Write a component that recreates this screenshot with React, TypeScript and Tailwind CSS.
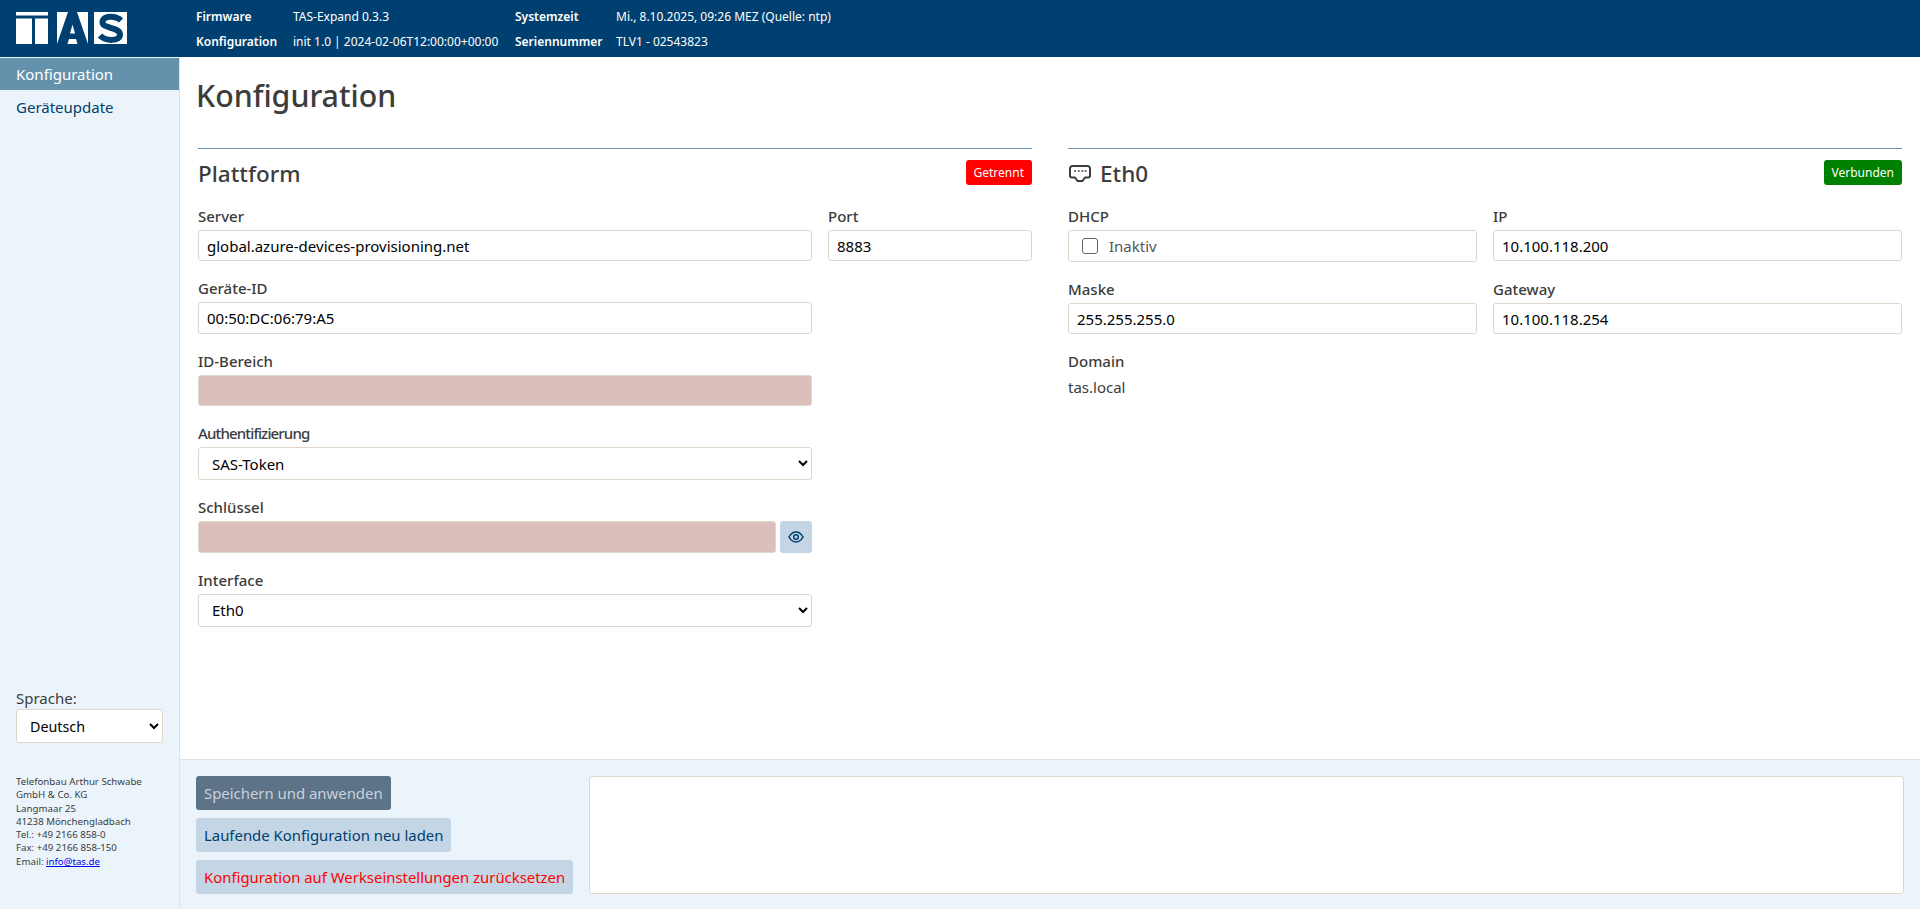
import React from "react";

function Label({ children, tight }: { children: React.ReactNode; tight?: boolean }) {
  return (
    <div className={"h-[25px] text-[15px] leading-[22px] font-medium text-[#3c3c3c] " + (tight ? "tracking-[-0.85px]" : "")}>
      {children}
    </div>
  );
}

function TextBox({ value, disabled }: { value?: string; disabled?: boolean }) {
  return (
    <input
      readOnly
      value={value ?? ""}
      className={
        "block w-full h-[31.250px] px-[8px] text-[15px] text-black rounded-[3px] border border-[#e0d6ca] outline-none " +
        (disabled ? "bg-[#dbbfbb]" : "bg-white")
      }
    />
  );
}

function Select({ value, small }: { value: string; small?: boolean }) {
  return (
    <select
      defaultValue={value}
      className={
        "block w-full h-[33.500px] pl-[9px] pr-[2px] text-black bg-white rounded-[3px] border border-[#e0d6ca] outline-none " +
        (small ? "text-[14.300px]" : "text-[15px]")
      }
    >
      <option>{value}</option>
    </select>
  );
}

function Field({ label, tight, children }: { label: string; tight?: boolean; children: React.ReactNode }) {
  return (
    <div className="mb-[16px]">
      <Label tight={tight}>{label}</Label>
      {children}
    </div>
  );
}

function Logo() {
  return (
    <svg width="111" height="32" viewBox="0 0 111 32">
      <rect x="0" y="0" width="32" height="3.500" fill="#fff" />
      <rect x="0" y="6.500" width="16" height="25.500" fill="#fff" />
      <rect x="19" y="6.500" width="13" height="25.500" fill="#fff" />
      <rect x="41" y="0" width="31" height="32" fill="#fff" />
      <path d="M41 32L52 0h9l11 32H61.500l-1.500-5h-7l-1.500 5z" fill="#004070" />
      <path d="M54 21.500h5l-2.500-9z" fill="#fff" />
      <rect x="78" y="0" width="33" height="32" fill="#fff" />
      <path d="M105 8.500C100 3.500 87 3 86.500 10C86 17 104 14.500 104 22.500C104 29.500 90 29.500 84 23.500" fill="none" stroke="#004070" strokeWidth="6" />
    </svg>
  );
}

function PortIcon() {
  return (
    <svg width="22" height="18" viewBox="0 0 22 18" fill="none" stroke="#3c3c3c" strokeWidth="2" strokeLinejoin="round">
      <path d="M3.500 1h15A2.500 2.500 0 0 1 21 3.500v7a2 2 0 0 1-2 2h-3l-2.500 3.500h-5L6 12.500H3a2 2 0 0 1-2-2v-7A2.500 2.500 0 0 1 3.500 1z" />
      <path d="M6 5.200v1.600M9.700 5.200v1.600M13.300 5.200v1.600M16.500 5.200v1.600" strokeWidth="1.800" />
    </svg>
  );
}

function EyeIcon() {
  return (
    <svg width="16" height="12" viewBox="0 0 16 12" fill="none" stroke="#004070" strokeWidth="1.500">
      <path d="M1 6C3 2.500 5.500 1 8 1s5 1.500 7 5c-2 3.500-4.500 5-7 5S3 9.500 1 6z" />
      <circle cx="8" cy="6" r="2.300" />
    </svg>
  );
}

function SectionHead({ title, badge, color, icon }: { title: string; badge: string; color: string; icon?: React.ReactNode }) {
  return (
    <div className="flex justify-between items-start h-[45px]">
      <h2 className="flex items-center text-[22.500px] leading-[27px] font-medium text-[#3c3c3c]">
        {icon}
        {title}
      </h2>
      <span className={"h-[25px] px-[8px] leading-[25px] rounded-[3px] text-white text-[12px] " + color}>{badge}</span>
    </div>
  );
}

export default function App() {
  return (
    <div className="h-screen flex flex-col overflow-hidden bg-white" style={{ fontFamily: '"Noto Sans", sans-serif' }}>
      <header className="h-[57px] shrink-0 bg-[#004070] flex text-white text-[12px]">
        <div className="w-[196px] pl-[16px] pt-[12px]"><Logo /></div>
        <div className="grid grid-cols-[97px_222px_101px_1fr] grid-rows-[25px_25px] pt-[4px] items-center">
          <b className="font-semibold">Firmware</b><span>TAS-Expand 0.3.3</span>
          <b className="font-semibold">Systemzeit</b><span>Mi., 8.10.2025, 09:26 MEZ (Quelle: ntp)</span>
          <b className="font-semibold">Konfiguration</b><span>init 1.0 | 2024-02-06T12:00:00+00:00</span>
          <b className="font-semibold">Seriennummer</b><span>TLV1 - 02543823</span>
        </div>
      </header>
      <div className="flex flex-1 min-h-0">
        <aside className="w-[180px] shrink-0 bg-[#ebf4fb] border-r border-[#dee2e6] flex flex-col">
          <div className="mt-[1px] h-[32px] bg-[#6492ac] text-white text-[15px] leading-[32px] pl-[16px]">Konfiguration</div>
          <div className="h-[33px] text-[#004070] text-[15px] leading-[34px] pl-[16px]">Geräteupdate</div>
          <div className="mt-auto px-[16px] pb-[41px] text-[#3c3c3c]">
            <div className="text-[15px] leading-[20px] mb-[1px]">Sprache:</div>
            <Select value="Deutsch" small />
            <div className="mt-[32px] text-[9.700px] leading-[13.300px]">
              Telefonbau Arthur Schwabe<br />GmbH &amp; Co. KG<br />Langmaar 25<br />41238 Mönchengladbach<br />Tel.: +49 2166 858-0<br />Fax: +49 2166 858-150<br />Email: <a className="text-[#0000ee] underline">info@tas.de</a>
            </div>
          </div>
        </aside>
        <main className="flex-1 min-w-0 flex flex-col">
          <div className="flex-1 min-h-0 pl-[18px] pr-[18px]">
            <h1 className="text-[30.300px] leading-[38px] font-medium text-[#3c3c3c] pt-[20px] h-[91px] -ml-[2px]">Konfiguration</h1>
            <div className="grid grid-cols-2 gap-x-[36px]">
              <section className="border-t border-[#6b93b3] pt-[11px]">
                <SectionHead title="Plattform" badge="Getrennt" color="bg-[#ff0000]" />
                <div className="grid grid-cols-[614px_1fr] gap-x-[16px]">
                  <Field label="Server"><TextBox value="global.azure-devices-provisioning.net" /></Field>
                  <Field label="Port"><TextBox value="8883" /></Field>
                </div>
                <div className="w-[614px]">
                  <Field label="Geräte-ID"><TextBox value="00:50:DC:06:79:A5" /></Field>
                  <Field label="ID-Bereich"><TextBox disabled /></Field>
                  <Field label="Authentifizierung" tight><Select value="SAS-Token" /></Field>
                  <Field label="Schlüssel">
                    <div className="flex gap-[4px]">
                      <TextBox disabled />
                      <button className="w-[32px] h-[31.250px] shrink-0 flex items-center justify-center rounded-[3px] bg-[#c4d6e5]"><EyeIcon /></button>
                    </div>
                  </Field>
                  <Field label="Interface"><Select value="Eth0" /></Field>
                </div>
              </section>
              <section className="border-t border-[#6b93b3] pt-[11px]">
                <SectionHead title="Eth0" badge="Verbunden" color="bg-[#008000]" icon={<span className="ml-[1px] mr-[9px] flex"><PortIcon /></span>} />
                <div className="grid grid-cols-2 gap-x-[16px]">
                  <Field label="DHCP">
                    <div className="h-[32px] flex items-center pl-[13px] rounded-[3px] border border-[#e0d6ca] text-[15px] text-[#555]">
                      <span className="w-[16px] h-[16px] rounded-[3px] border border-[#666] bg-white mr-[11px]"></span>
                      Inaktiv
                    </div>
                  </Field>
                  <Field label="IP"><TextBox value="10.100.118.200" /></Field>
                  <Field label="Maske"><TextBox value="255.255.255.0" /></Field>
                  <Field label="Gateway"><TextBox value="10.100.118.254" /></Field>
                </div>
                <Label>Domain</Label>
                <div className="text-[15px] leading-[24px] text-[#3c3c3c]">tas.local</div>
              </section>
            </div>
          </div>
          <div className="h-[150px] shrink-0 bg-[#ebf4fb] border-t border-[#dee2e6] pt-[16px] pl-[16px] pr-[16px] flex gap-[16px]">
            <div className="flex flex-col items-start gap-[8px] text-[14.900px]">
              <button className="h-[34px] px-[8px] rounded-[3px] bg-[#5c7388] text-[#c9d1d9]">Speichern und anwenden</button>
              <button className="h-[34px] px-[8px] rounded-[3px] bg-[#c4d6e5] text-[#004070]">Laufende Konfiguration neu laden</button>
              <button className="h-[34px] px-[8px] rounded-[3px] bg-[#c4d6e5] text-[#ff0000]">Konfiguration auf Werkseinstellungen zurücksetzen</button>
            </div>
            <div className="flex-1 h-[118px] bg-white rounded-[3px] border border-[#e0d6ca]"></div>
          </div>
        </main>
      </div>
    </div>
  );
}
